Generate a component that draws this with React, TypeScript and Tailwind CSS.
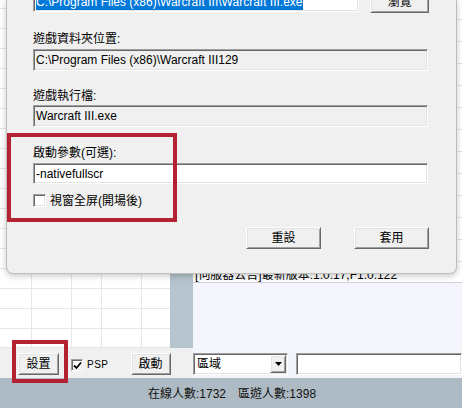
import React from "react";

const sunken =
  "border border-t-[#a0a0a0] border-l-[#a0a0a0] border-r-white border-b-white shadow-[inset_1px_1px_0_#696969,inset_-1px_-1px_0_#e3e3e3]";
const raised =
  "border border-t-white border-l-white border-r-[#696969] border-b-[#696969] shadow-[inset_1px_1px_0_#e3e3e3,inset_-1px_-1px_0_#a0a0a0] bg-[#f0f0f0]";

function Btn({ w, children, className = "" }: { w: string; children: React.ReactNode; className?: string }) {
  return (
    <div className={`${raised} ${w} h-[22px] flex items-center justify-center leading-[14px] ${className}`}>
      {children}
    </div>
  );
}

function CheckBox({ checked = false, size = "w-[13px] h-[13px]" }: { checked?: boolean; size?: string }) {
  return (
    <div className={`${size} bg-white ${sunken} flex items-center justify-center`}>
      {checked && (
        <svg width="9" height="9" viewBox="0 0 9 9">
          <path d="M1 4.5 L3.5 7 L8 1.5" stroke="#000" strokeWidth="1.8" fill="none" />
        </svg>
      )}
    </div>
  );
}

const leftRows = [9, 20, 20, 20, 20, 20, 20, 20, 20, 20, 20, 20, 20, 20, 20, 20, 20, 19];
const rightRows = [20, 22, 22, 22, 22, 22, 22, 22, 22, 22, 22, 22];

export default function App() {
  return (
    <div className="relative w-[462px] h-[408px] overflow-hidden bg-[#f0f0f0] font-['Liberation_Sans','Noto_Sans_CJK_TC',sans-serif] text-[12px] text-black">
      {/* background window */}
      <div className="flex flex-col h-full">
        <div className="flex h-[348px]">
          {/* left grid list */}
          <div className="w-[170px] bg-white flex flex-col">
            {leftRows.map((h, i) => (
              <div key={i} className="grid grid-cols-[32px_40px_30px_40px_28px] border-b border-[#e6e6e6]" style={{ height: h }}>
                <div className="border-r border-[#e6e6e6]" />
                <div className="border-r border-[#e6e6e6]" />
                <div className="border-r border-[#e6e6e6]" />
                <div className="border-r border-[#e6e6e6]" />
                <div />
              </div>
            ))}
          </div>
          <div className="w-[23px] bg-[#b5c4cd]" />
          {/* right panel */}
          <div className="flex-1 flex flex-col">
            <div className="bg-white flex flex-col h-[262px]">
              {rightRows.map((h, i) => (
                <div key={i} className="border-b border-[#e3e3e3] shrink-0" style={{ height: h }} />
              ))}
            </div>
            <div className="h-[21px] bg-white border-b border-[#cfd2da] flex items-end pl-[2px] leading-[14px] whitespace-nowrap">
              [伺服器公告]最新版本:1.0.17,F1.0.122
            </div>
            <div className="flex-1 bg-[#f5f6fd]" />
          </div>
        </div>
        {/* controls row */}
        <div className="flex h-[30px]">
          <div className="w-[193px] flex items-start pt-[5px]">
            <Btn w="w-[41px]" className="ml-[18px]">設置</Btn>
            <div className="ml-[12px] mt-[6px]">
              <CheckBox checked size="w-[12px] h-[12px]" />
            </div>
            <div className="ml-[4px] mt-[5px] text-[10px] leading-[13px] tracking-[0.5px]">PSP</div>
            <Btn w="w-[40px]" className="ml-[22px]">啟動</Btn>
          </div>
          <div className="flex-1 bg-[#f4f5fb] flex items-start pt-[5px]">
            <div className={`w-[95px] h-[22px] bg-white ${sunken} flex items-center justify-between pl-[3px] pr-[1px]`}>
              <span className="leading-[14px]">區域</span>
              <div className={`${raised} w-[16px] h-[18px] flex items-center justify-center`}>
                <svg width="7" height="4" viewBox="0 0 7 4">
                  <path d="M0 0 H7 L3.5 4 Z" fill="#000" />
                </svg>
              </div>
            </div>
            <div className={`ml-[8px] flex-1 h-[22px] bg-white ${sunken}`} />
          </div>
        </div>
        {/* status bar */}
        <div className="h-[30px] bg-[#aebbc4] flex items-center pl-[148px] gap-[12px] text-[#111] leading-[14px] pt-[1px]">
          <span>在線人數:1732</span>
          <span>區遊人數:1398</span>
        </div>
      </div>

      {/* dialog window */}
      <div className="absolute left-[6px] top-0 w-[451px] h-[274px] bg-[#f0f0f0] rounded-b-[7px] border border-t-0 border-[#bdbdbd] shadow-[0_2px_6px_rgba(0,0,0,0.22)] pl-[26px] pr-[27px]">
        <div className="flex items-start mt-[-10px]">
          <div className={`w-[329px] h-[22px] bg-white ${sunken} flex items-center pl-[2px] pt-[3px] whitespace-nowrap overflow-hidden`}>
            <span className="bg-[#0078d7] text-white leading-[15px]">C:\Program Files (x86)\Warcraft III\Warcraft III.exe</span>
          </div>
          <Btn w="w-[59px]" className="ml-[11px] mt-[1px]">瀏覽</Btn>
        </div>
        <div className="mt-[19px] h-[14px] leading-[14px]">遊戲資料夾位置:</div>
        <div className={`mt-[3px] w-[395px] h-[22px] ${sunken} flex items-center pl-[2px] leading-[14px]`}>
          C:\Program Files (x86)\Warcraft III129
        </div>
        <div className="mt-[18px] h-[14px] leading-[14px]">遊戲執行檔:</div>
        <div className={`mt-[2px] w-[395px] h-[22px] ${sunken} flex items-center pl-[2px] leading-[14px]`}>
          Warcraft III.exe
        </div>
        <div className="mt-[19px] h-[14px] leading-[14px]">啟動參數(可選):</div>
        <div className={`mt-[3px] w-[395px] h-[21px] bg-white ${sunken} flex items-center pl-[2px] leading-[14px]`}>
          -nativefullscr
        </div>
        <div className="mt-[10px] flex items-center h-[13px]">
          <CheckBox />
          <span className="ml-[4px] leading-[14px]">視窗全屏(開場後)</span>
        </div>
        <div className="mt-[20px] flex justify-end gap-[33px]">
          <Btn w="w-[75px]">重設</Btn>
          <Btn w="w-[75px]">套用</Btn>
        </div>
      </div>

      {/* red annotation boxes */}
      <div className="absolute left-[7px] top-[133px] w-[170px] h-[89px] border-[4px] border-[#b42130]" />
      <div className="absolute left-[12px] top-[340px] w-[56px] h-[43px] border-[4px] border-[#b42130]" />
    </div>
  );
}
